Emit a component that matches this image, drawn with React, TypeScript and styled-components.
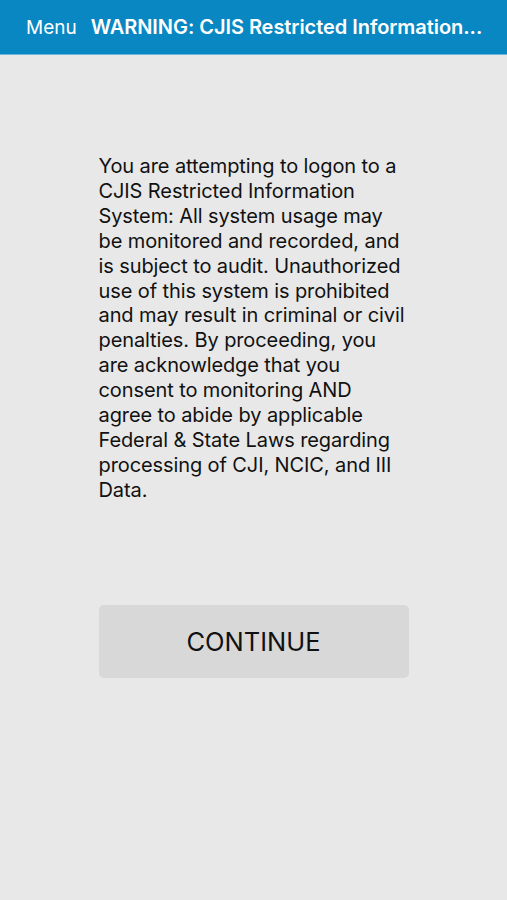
import React from "react";
import styled, { createGlobalStyle } from "styled-components";

const GlobalStyle = createGlobalStyle`
  html, body {
    margin: 0;
    padding: 0;
    background: #e8e8e8;
  }
  body {
    font-family: Inter, "Noto Sans", "Liberation Sans", sans-serif;
    -webkit-font-smoothing: antialiased;
  }
`;

const Screen = styled.div`
  width: 507px;
  height: 900px;
  display: flex;
  flex-direction: column;
  background: #e8e8e8;
  overflow: hidden;
`;

const NavBar = styled.header`
  height: 54px;
  flex: 0 0 54px;
  display: flex;
  align-items: center;
  gap: 14px;
  padding: 0 0 0 26px;
  background: #0887c3;
  border-bottom: 1px solid #6cb7dc;
  color: #ffffff;
  white-space: nowrap;
  overflow: hidden;
`;

const MenuLabel = styled.span`
  font-size: 19px;
  font-weight: 400;
`;

const Title = styled.span`
  font-size: 20px;
  font-weight: 600;
  letter-spacing: -0.05px;
`;

const Body = styled.main`
  display: flex;
  flex-direction: column;
  align-items: center;
  padding-top: 99px;
`;

const Notice = styled.div`
  width: 310px;
  color: #111111;
  font-size: 20px;
  line-height: 24.9px;
  letter-spacing: -0.1px;
`;

const Line = styled.div`
  white-space: nowrap;
`;

const ContinueButton = styled.button`
  margin-top: 102px;
  width: 310px;
  height: 73px;
  border: none;
  border-radius: 5px;
  background: #d8d8d8;
  color: #111111;
  font-family: inherit;
  font-size: 25.5px;
  font-weight: 400;
  cursor: pointer;
`;

const lines = [
  "You are attempting to logon to a",
  "CJIS Restricted Information",
  "System: All system usage may",
  "be monitored and recorded, and",
  "is subject to audit. Unauthorized",
  "use of this system is prohibited",
  "and may result in criminal or civil",
  "penalties. By proceeding, you",
  "are acknowledge that you",
  "consent to monitoring AND",
  "agree to abide by applicable",
  "Federal & State Laws regarding",
  "processing of CJI, NCIC, and III",
  "Data.",
];

export default function App() {
  return (
    <>
      <GlobalStyle />
      <Screen>
        <NavBar>
          <MenuLabel>Menu</MenuLabel>
          <Title>WARNING: CJIS Restricted Information...</Title>
        </NavBar>
        <Body>
          <Notice>
            {lines.map((l, i) => (
              <Line key={i}>{l}</Line>
            ))}
          </Notice>
          <ContinueButton>CONTINUE</ContinueButton>
        </Body>
      </Screen>
    </>
  );
}
